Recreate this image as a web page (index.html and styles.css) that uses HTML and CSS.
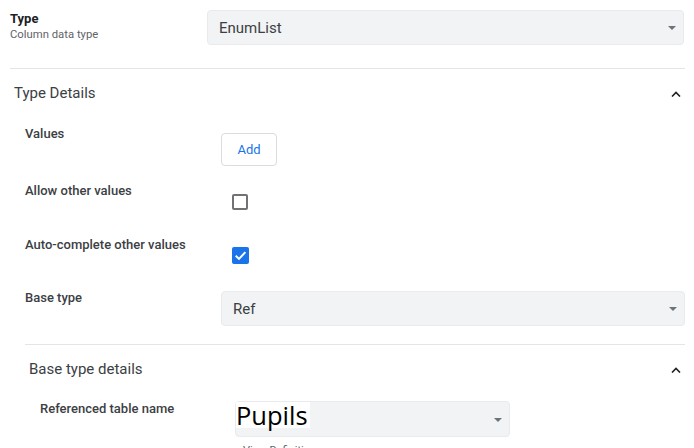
FILE: index.html
```html
<!DOCTYPE html>
<html>
<head>
<meta charset="utf-8">
<link rel="stylesheet" href="styles.css">
</head>
<body>
<div class="page">
  <div class="top-row">
    <div class="top-label">
      <div class="label-strong">Type</div>
      <div class="label-sub">Column data type</div>
    </div>
    <div class="select select-top">
      <span class="select-value">EnumList</span>
      <span class="arrow"></span>
    </div>
  </div>

  <div class="section">
    <div class="section-header">
      <span class="section-title">Type Details</span>
      <svg class="chevron" width="10" height="6" viewBox="0 0 10 6"><polyline points="1,5.5 5,1.5 9,5.5" fill="none" stroke="#202124" stroke-width="1.6"/></svg>
    </div>
    <div class="section-body">
      <div class="row row-values">
        <div class="row-label">Values</div>
        <div class="row-control"><button class="add-btn">Add</button></div>
      </div>
      <div class="row row-allow">
        <div class="row-label">Allow other values</div>
        <div class="row-control"><span class="checkbox"></span></div>
      </div>
      <div class="row row-auto">
        <div class="row-label">Auto-complete other values</div>
        <div class="row-control">
          <span class="checkbox checked">
            <svg width="16" height="16" viewBox="0 0 16 16"><polyline points="3.5,8.2 6.6,11.2 12.6,4.8" fill="none" stroke="#fff" stroke-width="1.9"/></svg>
          </span>
        </div>
      </div>
      <div class="row row-base">
        <div class="row-label">Base type</div>
        <div class="row-control">
          <div class="select">
            <span class="select-value">Ref</span>
            <span class="arrow"></span>
          </div>
        </div>
      </div>

      <div class="section nested">
        <div class="section-header">
          <span class="section-title">Base type details</span>
          <svg class="chevron" width="10" height="6" viewBox="0 0 10 6"><polyline points="1,5.5 5,1.5 9,5.5" fill="none" stroke="#202124" stroke-width="1.6"/></svg>
        </div>
        <div class="section-body nested-body">
          <div class="row row-ref">
            <div class="row-label">Referenced table name</div>
            <div class="row-control">
              <div class="select select-pupils">
                <span class="pupils-value">Pupils</span>
                <span class="arrow"></span>
              </div>
              <div class="view-def">View Definition</div>
            </div>
          </div>
        </div>
      </div>
    </div>
  </div>
</div>
</body>
</html>
```

FILE: styles.css
```css
html, body {
  margin: 0;
  padding: 0;
  background: #fff;
  overflow: hidden;
}
body {
  font-family: Roboto, "Liberation Sans", sans-serif;
  color: #3c4043;
}
.page {
  width: 675px;
  padding: 10px 0 0 10px;
}
.top-row {
  display: grid;
  grid-template-columns: 197px 1fr;
  margin-right: 1px;
}
.top-label {
  padding-top: 1px;
}
.label-strong {
  font-size: 13px;
  line-height: 16px;
  font-weight: 700;
  color: #202124;
}
.label-sub {
  font-size: 11.3px;
  line-height: 14px;
  margin-top: 1px;
  color: #5f6368;
}
.select {
  box-sizing: border-box;
  height: 35px;
  background: #f1f3f4;
  border: 1px solid #e8eaed;
  border-radius: 4px;
  display: flex;
  align-items: center;
  justify-content: space-between;
  padding: 0 7px 0 11px;
}
.select-value {
  font-size: 15px;
  line-height: 18px;
  color: #3c4043;
}
.arrow {
  width: 0;
  height: 0;
  border-left: 4px solid transparent;
  border-right: 4px solid transparent;
  border-top: 4px solid #6f7378;
  margin-top: 1px;
}
.section {
  margin-top: 23px;
  border-top: 1px solid #e3e5e8;
}
.section-header {
  height: 48px;
  display: flex;
  align-items: center;
  justify-content: space-between;
  padding: 0 4px 0 4px;
}
.section-title {
  font-size: 15px;
  line-height: 18px;
  color: #3c4043;
}
.chevron {
  display: block;
  margin-top: 1px;
}
.section-body {
  padding: 9px 0 0 15px;
}
.row {
  display: grid;
  grid-template-columns: 196px 1fr;
  align-items: start;
}
.row-label {
  font-size: 13px;
  line-height: 16px;
  font-weight: 500;
  color: #3c4043;
}
.add-btn {
  margin-top: 7px;
  width: 56px;
  height: 33px;
  background: #fff;
  border: 1px solid #dadce0;
  border-radius: 4px;
  color: #1a73e8;
  font-family: Roboto, "Liberation Sans", sans-serif;
  font-size: 13px;
  padding: 0;
  display: block;
}
.row-allow {
  margin-top: 17px;
}
.row-auto {
  margin-top: 27px;
}
.row-base {
  margin-top: 26px;
}
.checkbox {
  display: block;
  box-sizing: border-box;
  width: 16px;
  height: 16px;
  border: 2px solid #6f7276;
  border-radius: 2px;
  margin-left: 11px;
  margin-top: 11px;
}
.checkbox.checked {
  border: none;
  background: #1a73e8;
  width: 17px;
  height: 17px;
  margin-top: 10px;
}
.checkbox.checked svg {
  display: block;
  width: 17px;
  height: 17px;
}
.row-base .select {
  margin-top: 1px;
}
.section.nested {
  margin-top: 18px;
}
.nested-body {
  padding: 8px 0 0 15px;
}
.row-ref {
  grid-template-columns: 195px 1fr;
}
.select-pupils {
  width: 275px;
  height: 36px;
  padding: 0 7px 0 0;
  align-items: flex-start;
}
.pupils-value {
  display: inline-block;
  height: 26px;
  line-height: 26px;
  background: #fff;
  color: #000;
  font-family: "Open Sans", "Noto Sans", sans-serif;
  font-size: 25.5px;
  padding-right: 2px;
  overflow: visible;
}
.select-pupils .arrow {
  align-self: center;
}
.view-def {
  font-size: 11px;
  line-height: 14px;
  color: #5f6368;
  padding-left: 8px;
  margin-top: 7px;
}
```
